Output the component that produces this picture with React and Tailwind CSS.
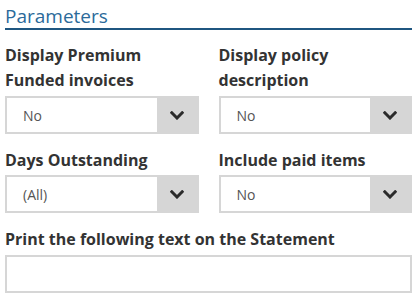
const fields = [
  { label: ['Display Premium', 'Funded invoices'], value: 'No' },
  { label: ['Display policy', 'description'], value: 'No' },
  { label: ['Days Outstanding'], value: '(All)' },
  { label: ['Include paid items'], value: 'No' },
]

function Chevron() {
  return (
    <svg width="14" height="9" viewBox="0 0 14 9" fill="none">
      <polyline points="1.8,1.8 7,7 12.2,1.8" stroke="#2b2b2b" strokeWidth="3" strokeLinecap="square" />
    </svg>
  )
}

function Select({ value }) {
  return (
    <div className="flex h-[38px] items-stretch border-2 border-[#d6d6d6] bg-white">
      <div className="flex flex-1 items-center pl-[16px] text-[14px] text-[#555]">{value}</div>
      <div className="flex w-[40px] items-center justify-center bg-[#d6d6d6]">
        <Chevron />
      </div>
    </div>
  )
}

export default function App() {
  return (
    <div className="h-[294px] w-[413px] overflow-hidden bg-white pl-[5px] pr-[1px] font-['Open_Sans',sans-serif]">
      {/* Title */}
      <div className="h-[30px] border-b-2 border-[#1f5680] pt-[2px] text-[19px] leading-normal text-[#2b6a9a]">
        Parameters
      </div>

      {/* Fields */}
      <div className="mt-[13px] grid grid-cols-2 gap-x-5 gap-y-[14px]">
        {fields.map((f, i) => (
          <div key={i}>
            <div className="text-[16px] font-bold leading-[25px] text-[#333]">
              {f.label.map((l, j) => <div key={j}>{l}</div>)}
            </div>
            <div className={f.label.length > 1 ? 'mt-[3px]' : 'mt-[2px]'}>
              <Select value={f.value} />
            </div>
          </div>
        ))}
        <div className="col-span-2">
          <div className="text-[16px] font-bold leading-[25px] text-[#333]">
            Print the following text on the Statement
          </div>
          <div className="mt-[3px] h-[38px] border-2 border-[#d6d6d6] bg-white" />
        </div>
      </div>
    </div>
  )
}
